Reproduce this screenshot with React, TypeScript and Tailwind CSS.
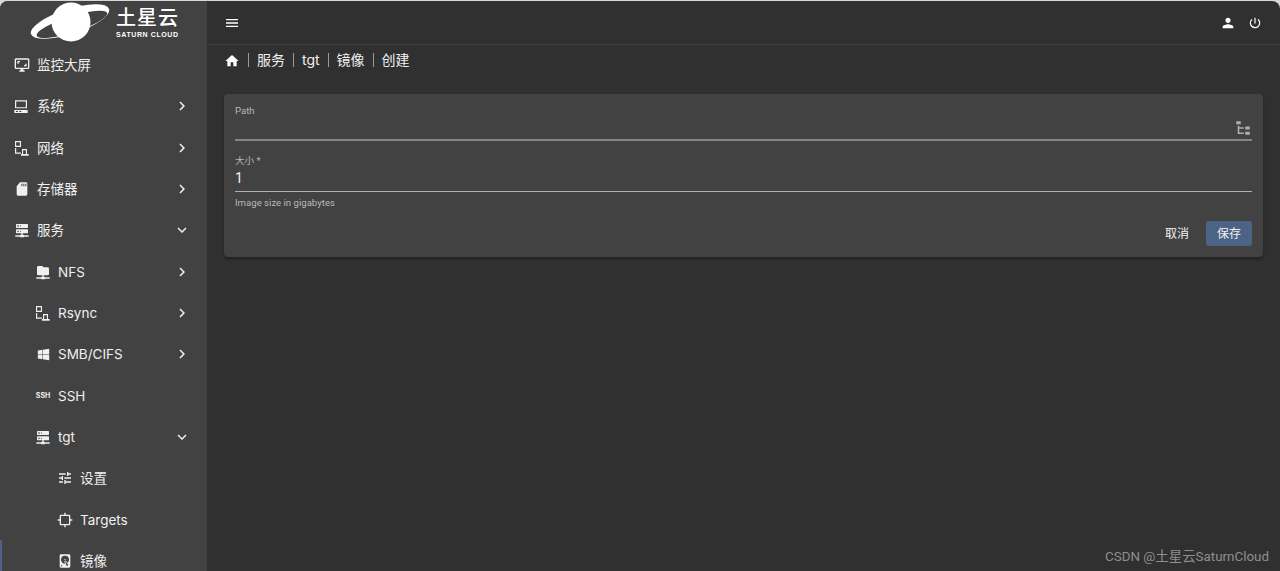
import { ReactNode } from 'react'
import {
  MdChevronRight,
  MdExpandMore,
  MdHome,
  MdMenu,
  MdPerson,
  MdPowerSettingsNew,
  MdTune,
} from 'react-icons/md'
import { FaWindows } from 'react-icons/fa'

const cjk = "font-['Roboto','Noto_Sans_CJK_SC',sans-serif]"
const inter = "font-['Inter','Noto_Sans_CJK_SC',sans-serif]"

function Mdi({ d, className }: { d: string; className?: string }) {
  return (
    <svg viewBox="0 0 24 24" fill="currentColor" className={className ?? 'size-[16px] shrink-0'}>
      <path d={d} />
    </svg>
  )
}

const monitor =
  'M9,6H5V10H7V8H9M19,10H17V12H15V14H19M21,16H3V4H21M21,2H3C1.89,2 1,2.89 1,4V16A2,2 0 0,0 3,18H10V20H8V22H16V20H14V18H21A2,2 0 0,0 23,16V4C23,2.89 22.1,2 21,2'
const desktop =
  'M1.5,3.5H19.5V15.5H1.5ZM3.3,5.3V13.7H17.7V5.3ZM0.5,18H20.5V22.5H0.5ZM3,19.5V21H6V19.5ZM8,19.5V21H11V19.5Z'
const network =
  'M1.5,1.5H10.5V10.5H1.5ZM3.2,3.2V8.8H8.8V3.2ZM1.5,12H3.3V18.8H10.5V20.5H1.5ZM12,13.5H19.5V21H22V23.5H10.5V21H12ZM13.7,15.2V21H17.8V15.2Z'
const sdCard =
  'M9,2H18A2,2 0 0,1 20,4V20A2,2 0 0,1 18,22H6A2,2 0 0,1 4,20V8L9,2M11,4V8H12.5V4H11M14,4V8H15.5V4H14M17,4V8H18.5V4H17Z'
const serverNetwork =
  'M13,19H14A1,1 0 0,1 15,20H22V22H15A1,1 0 0,1 14,23H10A1,1 0 0,1 9,22H2V20H9A1,1 0 0,1 10,19H11V17H4A1,1 0 0,1 3,16V12A1,1 0 0,1 4,11H20A1,1 0 0,1 21,12V16A1,1 0 0,1 20,17H13V19M4,3H20A1,1 0 0,1 21,4V8A1,1 0 0,1 20,9H4A1,1 0 0,1 3,8V4A1,1 0 0,1 4,3M9,7H10V5H9V7M9,15H10V13H9V15M5,5V7H7V5H5M5,13V15H7V13H5Z'
const folderNetwork =
  'M3,15V5A2,2 0 0,1 5,3H11L13,5H19A2,2 0 0,1 21,7V15A2,2 0 0,1 19,17H13V19H14A1,1 0 0,1 15,20H22V22H15A1,1 0 0,1 14,23H10A1,1 0 0,1 9,22H2V20H9A1,1 0 0,1 10,19H11V17H5A2,2 0 0,1 3,15Z'
const target =
  'M11,1H13V4H18A2,2 0 0,1 20,6V11H23V13H20V18A2,2 0 0,1 18,20H13V23H11V20H6A2,2 0 0,1 4,18V13H1V11H4V6A2,2 0 0,1 6,4H11V1M6,6V18H18V6H6Z'
const harddisk =
  'M6,2H18A2,2 0 0,1 20,4V20A2,2 0 0,1 18,22H6A2,2 0 0,1 4,20V4A2,2 0 0,1 6,2M12,4A6,6 0 0,0 6,10C6,13.31 8.69,16 12.1,16L11.22,13.77C10.95,13.29 11.11,12.68 11.59,12.4L12.45,11.9C12.93,11.63 13.54,11.79 13.82,12.27L15.74,14.69C17.12,13.59 18,11.9 18,10A6,6 0 0,0 12,4M12,9A1,1 0 0,1 13,10A1,1 0 0,1 12,11A1,1 0 0,1 11,10A1,1 0 0,1 12,9M7,18A1,1 0 0,0 6,19A1,1 0 0,0 7,20A1,1 0 0,0 8,19A1,1 0 0,0 7,18M12.09,13.27L14.58,19.58L17.17,18.08L12.95,12.77L12.09,13.27Z'
const fileTree =
  'M3,3H9V7H3V3M15,10H21V14H15V10M15,17H21V21H15V17M13,13H7V18H13V20H7L5,20V9H7V11H13V13Z'

interface NavItem {
  label: string
  icon: ReactNode
  indent: string
  arrow?: 'right' | 'down'
  active?: boolean
}

const navItems: NavItem[] = [
  { label: '监控大屏', icon: <Mdi d={monitor} />, indent: 'pl-[14px]' },
  { label: '系统', icon: <Mdi d={desktop} />, indent: 'pl-[14px]', arrow: 'right' },
  { label: '网络', icon: <Mdi d={network} />, indent: 'pl-[14px]', arrow: 'right' },
  { label: '存储器', icon: <Mdi d={sdCard} />, indent: 'pl-[14px]', arrow: 'right' },
  { label: '服务', icon: <Mdi d={serverNetwork} />, indent: 'pl-[14px]', arrow: 'down' },
  { label: 'NFS', icon: <Mdi d={folderNetwork} />, indent: 'pl-[35px]', arrow: 'right' },
  { label: 'Rsync', icon: <Mdi d={network} />, indent: 'pl-[35px]', arrow: 'right' },
  {
    label: 'SMB/CIFS',
    icon: <FaWindows className="size-[13px] mx-[1.5px] shrink-0" />,
    indent: 'pl-[35px]',
    arrow: 'right',
  },
  {
    label: 'SSH',
    icon: <span className="w-[16px] text-center text-[7px] font-bold leading-none">SSH</span>,
    indent: 'pl-[35px]',
  },
  { label: 'tgt', icon: <Mdi d={serverNetwork} />, indent: 'pl-[35px]', arrow: 'down' },
  { label: '设置', icon: <MdTune className="size-[16px] shrink-0" />, indent: 'pl-[57px]' },
  { label: 'Targets', icon: <Mdi d={target} />, indent: 'pl-[57px]' },
  { label: '镜像', icon: <Mdi d={harddisk} />, indent: 'pl-[57px]', active: true },
]

function Logo() {
  return (
    <div className="h-[43.5px] flex items-center pl-[30px] gap-[4px] border-b border-[#424242]">
      <svg viewBox="30 0 82 44" className="w-[82px] h-[44px] shrink-0">
        <g transform="rotate(-17.8 70 21.5)">
          <ellipse cx="70" cy="21.5" rx="41" ry="12.5" fill="#fff" />
          <ellipse cx="71" cy="24.8" rx="37" ry="8" fill="#424242" />
        </g>
        <circle cx="71" cy="22" r="19.5" fill="#fff" />
      </svg>
      <div className={`text-white flex flex-col leading-none ${cjk}`}>
        <span className="text-[20px] font-medium leading-[22px] tracking-[1px] mt-[1px]">土星云</span>
        <span className="text-[7px] font-bold tracking-[0.6px] leading-[9px] mt-[1px] whitespace-nowrap font-['Liberation_Sans',sans-serif]">
          SATURN CLOUD
        </span>
      </div>
    </div>
  )
}

function SideNav() {
  return (
    <nav className={`w-[208px] shrink-0 h-full overflow-hidden bg-[#424242] border-r border-[#303030] text-[#f0f0f0] ${inter}`}>
      <Logo />
      {navItems.map((item) => (
        <div
          key={item.label}
          className={`h-[41.33px] flex items-center pr-[16px] text-[13.5px] gap-[7px] ${item.indent} ${
            item.active ? 'shadow-[inset_2px_0_0_#4b6384]' : ''
          }`}
        >
          {item.icon}
          <span className="flex-1">{item.label}</span>
          {item.arrow === 'right' && <MdChevronRight className="size-[18px]" />}
          {item.arrow === 'down' && <MdExpandMore className="size-[18px]" />}
        </div>
      ))}
    </nav>
  )
}

function TopBar() {
  return (
    <header className="h-[44px] flex items-center justify-between pl-[16px] pr-[18px] border-b border-[#424242] text-white">
      <MdMenu className="size-[16px]" />
      <div className="flex items-center gap-[12px]">
        <MdPerson className="size-[16px]" />
        <MdPowerSettingsNew className="size-[14px]" />
      </div>
    </header>
  )
}

function Breadcrumb() {
  const crumbs = ['服务', 'tgt', '镜像', '创建']
  return (
    <div className={`flex items-center pl-[16px] h-[29px] text-[14px] text-[#f0f0f0] ${inter}`}>
      <MdHome className="size-[16px] text-white mt-[2px]" />
      {crumbs.map((crumb) => (
        <div key={crumb} className="flex items-center">
          <span className="w-px h-[14px] bg-[#9a9a9a] mx-[8px]" />
          <span>{crumb}</span>
        </div>
      ))}
    </div>
  )
}

function FormCard() {
  return (
    <section className="mt-[20px] ml-[16px] mr-[17px] h-[163px] rounded-[4px] bg-[#424242] px-[11px] pt-[10px] shadow-[0_2px_3px_rgba(0,0,0,0.3)]">
      <div className="h-[37px] border-b-2 border-[#848484] flex flex-col">
        <span className="text-[9.6px] leading-[12px] mt-[1px] text-[#b8b8b8]">Path</span>
        <div className="flex-1 flex justify-end items-end">
          <Mdi d={fileTree} className="size-[18px] text-[#b0b0b0] mb-[2px]" />
        </div>
      </div>
      <div className="mt-[14px] h-[37px] border-b border-[#b0b0b0] flex flex-col">
        <span className="text-[9.6px] leading-[12px] text-[#b8b8b8]">大小 *</span>
        <span className="text-[14px] leading-[20px] text-[#f4f4f4] mt-[1px]">1</span>
      </div>
      <p className="mt-[5px] text-[9.6px] leading-[12px] text-[#b8b8b8]">Image size in gigabytes</p>
      <div className="mt-[12px] flex items-center justify-end gap-[17px] text-[12px] text-[#f0f0f0]">
        <button>取消</button>
        <button className="w-[46px] h-[25px] rounded-[3px] bg-[#4b6384]">保存</button>
      </div>
    </section>
  )
}

export default function App() {
  return (
    <div className="h-screen overflow-hidden bg-[#d8d8d8]">
      <div className={`relative h-full flex rounded-t-[8px] overflow-hidden mt-px bg-[#303030] ${cjk}`}>
        <SideNav />
        <main className="flex-1 min-w-0">
          <TopBar />
          <Breadcrumb />
          <FormCard />
        </main>
        <span className="absolute right-[11px] bottom-[6px] text-[13.4px] leading-[18px] text-[#8f8f8f]">
          CSDN @土星云SaturnCloud
        </span>
      </div>
    </div>
  )
}
